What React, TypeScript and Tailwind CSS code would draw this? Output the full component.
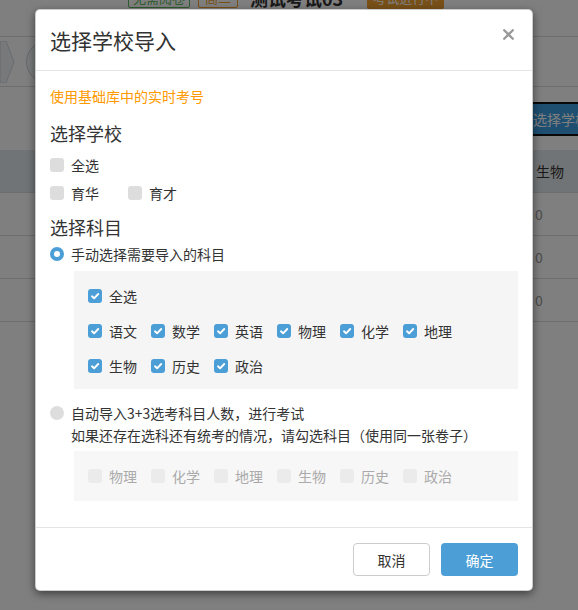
import React from 'react';

const BLUE = 'bg-[#4b9ed6]';

function Box({ checked, disabled }: { checked?: boolean; disabled?: boolean }) {
  if (checked) {
    return (
      <span className={`flex h-[14px] w-[14px] shrink-0 items-center justify-center rounded-[3px] ${BLUE}`}>
        <svg width="14" height="14" viewBox="0 0 14 14">
          <polyline points="4,7.3 6.1,9.3 10.2,5" fill="none" stroke="#fff" strokeWidth="1.9" strokeLinecap="round" strokeLinejoin="round" />
        </svg>
      </span>
    );
  }
  return (
    <span className={`block h-[14px] w-[14px] shrink-0 rounded-[3px] ${disabled ? 'bg-[#ebebeb]' : 'bg-[#dddddd]'}`} />
  );
}

function Item({ label, checked, disabled, gap = 'mr-[14px]' }: { label: string; checked?: boolean; disabled?: boolean; gap?: string }) {
  return (
    <label className={`flex h-[20px] items-center gap-[7px] ${gap}`}>
      <Box checked={checked} disabled={disabled} />
      <span className={disabled ? 'text-[#aaaaaa]' : 'text-[#333]'}>{label}</span>
    </label>
  );
}

function Background() {
  return (
    <div className="flex flex-col">
      {/* page header, scrolled so only the bottom of it shows */}
      <div className="h-[37px] border-b border-[#dddddd]">
        <div className="-mt-[13px] flex items-center pl-[128px]">
          <span className="flex h-[20px] w-[62px] items-center justify-center rounded-[2px] border border-[#5cb85c] text-[13px] text-[#5cb85c]">无需阅卷</span>
          <span className="ml-[8px] flex h-[20px] w-[40px] items-center justify-center rounded-[2px] border border-[#f0a030] text-[13px] text-[#f0a030]">高二</span>
          <span className="ml-[12px] text-[18px] font-bold text-[#333]">测试考试03</span>
          <span className="ml-[24px] flex h-[22px] w-[77px] items-center justify-center rounded-[2px] bg-[#f0a030] text-[13px] text-white">考试进行中</span>
        </div>
      </div>
      <div className="flex h-[50px] items-center gap-[10px] border-b border-[#dddddd]">
        <svg width="16" height="42" viewBox="0 0 16 42">
          <polygon points="0,0 6,0 14,21 6,42 0,42" fill="#eef2f5" stroke="#d0d8de" />
        </svg>
        <span className="block h-[42px] w-[42px] rounded-full border border-[#c8d0d6] bg-[#f4f6f8]" />
      </div>
      <div className="flex h-[63px] items-center pl-[524px]">
        <span className="flex h-[34px] w-[100px] shrink-0 items-center rounded-[3px] border-2 border-[#111] bg-[#3d9ee0] pl-[7px] text-[14px] text-white">选择学校</span>
      </div>
      <div className="flex h-[43px] items-center border-b border-[#dddddd] bg-[#e3e8ec] pl-[536px] text-[14px] text-[#333]">生物</div>
      {[0, 1, 2].map(i => (
        <div key={i} className="flex h-[43px] items-center border-b border-[#dddddd] pl-[535px] text-[14px] text-[#999]">0</div>
      ))}
    </div>
  );
}

export default function App() {
  const subjects = ['语文', '数学', '英语', '物理', '化学', '地理'];
  const subjects2 = ['生物', '历史', '政治'];
  const elective = ['物理', '化学', '地理', '生物', '历史', '政治'];

  return (
    <div className="relative h-[610px] w-[578px] overflow-hidden bg-white font-[family-name:'Noto_Sans_CJK_SC','Noto_Sans',sans-serif] text-[14px] leading-[20px] text-[#333]">
      <Background />
      <div className="absolute inset-0 bg-black/50" />

      <div className="absolute left-[35px] top-[9px] w-[498px] rounded-[5px] border border-black/20 bg-white shadow-[0_3px_9px_rgba(0,0,0,0.5)]">
        <div className="flex h-[61px] items-center justify-between border-b border-[#e5e5e5] pl-[14px] pr-[17px]">
          <h4 className="text-[21px] leading-[28px] text-[#333]">选择学校导入</h4>
          <button className="-mt-[12px] flex h-[14px] w-[14px] items-center justify-center">
            <svg width="11" height="11" viewBox="0 0 11 11">
              <path d="M1.2 1.2 L9.8 9.8 M9.8 1.2 L1.2 9.8" stroke="#999" strokeWidth="2.3" strokeLinecap="round" />
            </svg>
          </button>
        </div>

        <div className="flex flex-col px-[14px] pb-[26px] pt-[15px]">
          <p className="text-[14px] text-[#ff9900]">使用基础库中的实时考号</p>

          <h5 className="mt-[15px] text-[18px] leading-[24px]">选择学校</h5>
          <div className="mt-[10px] flex">
            <Item label="全选" />
          </div>
          <div className="mt-[8px] flex">
            <Item label="育华" gap="mr-[29px]" />
            <Item label="育才" />
          </div>

          <h5 className="mt-[12px] text-[18px] leading-[24px]">选择科目</h5>
          <label className="mt-[5px] flex h-[20px] items-center gap-[7px]">
            <span className="block h-[14px] w-[14px] rounded-full border-[4px] border-[#4b9ed6] bg-white" />
            <span>手动选择需要导入的科目</span>
          </label>
          <div className="ml-[24px] mt-[7px] flex flex-col gap-[15px] bg-[#f5f5f5] pb-[13px] pl-[14px] pt-[15px]">
            <div className="flex">
              <Item label="全选" checked />
            </div>
            <div className="flex">
              {subjects.map(s => (
                <Item key={s} label={s} checked />
              ))}
            </div>
            <div className="flex">
              {subjects2.map(s => (
                <Item key={s} label={s} checked />
              ))}
            </div>
          </div>

          <div className="mt-[13px] flex items-start gap-[7px]">
            <span className="mt-[4px] block h-[14px] w-[14px] shrink-0 rounded-full bg-[#dddddd]" />
            <div className="leading-[22px]">
              <div>自动导入3+3选考科目人数，进行考试</div>
              <div>如果还存在选科还有统考的情况，请勾选科目（使用同一张卷子）</div>
            </div>
          </div>
          <div className="ml-[24px] mt-[5px] flex bg-[#f7f7f7] py-[15px] pl-[14px]">
            {elective.map(s => (
              <Item key={s} label={s} disabled />
            ))}
          </div>
        </div>

        <div className="flex justify-end gap-[11px] border-t border-[#e5e5e5] pb-[14px] pr-[14px] pt-[15px]">
          <button className="h-[33px] w-[77px] rounded-[4px] border border-[#cccccc] bg-white text-[14px] text-[#333]">取消</button>
          <button className={`h-[33px] w-[77px] rounded-[4px] ${BLUE} text-[14px] text-white`}>确定</button>
        </div>
      </div>
    </div>
  );
}
